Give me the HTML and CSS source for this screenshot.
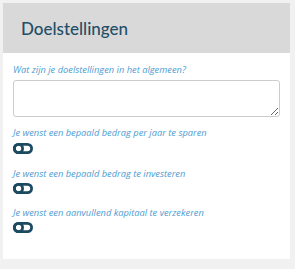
FILE: index.html
```html
<!DOCTYPE html>
<html lang="nl">
<head>
<meta charset="utf-8">
<link rel="stylesheet" href="styles.css">
</head>
<body>
<div class="card">
  <div class="card-header"><h2 class="title">Doelstellingen</h2></div>
  <div class="card-body">
    <label class="label">Wat zijn je doelstellingen in het algemeen?</label>
    <textarea class="textarea"></textarea>

    <label class="label label-gap">Je wenst een bepaald bedrag per jaar te sparen</label>
    <svg class="toggle" viewBox="0 0 20 11" width="20" height="11"><rect x="1.4" y="1.4" width="17.2" height="8.2" rx="4.1" fill="none" stroke="currentColor" stroke-width="2.8"/><circle cx="5.5" cy="5.5" r="4.1" fill="none" stroke="currentColor" stroke-width="2.8"/></svg>

    <label class="label label-gap2">Je wenst een bepaald bedrag te investeren</label>
    <svg class="toggle toggle-tight" viewBox="0 0 20 11" width="20" height="11"><rect x="1.4" y="1.4" width="17.2" height="8.2" rx="4.1" fill="none" stroke="currentColor" stroke-width="2.8"/><circle cx="5.5" cy="5.5" r="4.1" fill="none" stroke="currentColor" stroke-width="2.8"/></svg>

    <label class="label label-gap3">Je wenst een aanvullend kapitaal te verzekeren</label>
    <svg class="toggle toggle-tight" viewBox="0 0 20 11" width="20" height="11"><rect x="1.4" y="1.4" width="17.2" height="8.2" rx="4.1" fill="none" stroke="currentColor" stroke-width="2.8"/><circle cx="5.5" cy="5.5" r="4.1" fill="none" stroke="currentColor" stroke-width="2.8"/></svg>
  </div>
</div>
</body>
</html>
```
FILE: styles.css
```css
html, body {
  margin: 0;
  padding: 0;
  background: #f1f1f1;
}
body {
  padding: 3px 5px 10px 3px;
  font-family: "Open Sans", "Noto Sans", sans-serif;
}
.card {
  width: 287px;
  height: 256px;
  background: #ffffff;
  display: flex;
  flex-direction: column;
}
.card-header {
  height: 50px;
  background: #d9d9d9;
  display: flex;
  align-items: center;
  padding-left: 18px;
}
.title {
  margin: 0;
  font-family: "Lato", "Open Sans", sans-serif;
  font-weight: 500;
  font-size: 17px;
  color: #214e68;
}
.card-body {
  padding: 10px 10px 0 10px;
  display: flex;
  flex-direction: column;
  align-items: flex-start;
}
.label {
  display: block;
  height: 14px;
  line-height: 14px;
  font-size: 9.3px;
  font-style: italic;
  color: #4d9cd2;
}
.textarea {
  box-sizing: border-box;
  margin: 3px 0 0 0;
  width: 267px;
  height: 37px;
  border: 1px solid #cccccc;
  border-radius: 3px;
  background: #fff;
}
.label-gap { margin-top: 9px; }
.label-gap2 { margin-top: 13px; }
.label-gap3 { margin-top: 12px; }
.toggle {
  display: block;
  margin: 3px 0 0 0;
  color: #1c4a60;
}
.toggle-tight { margin-top: 2px; }
```
